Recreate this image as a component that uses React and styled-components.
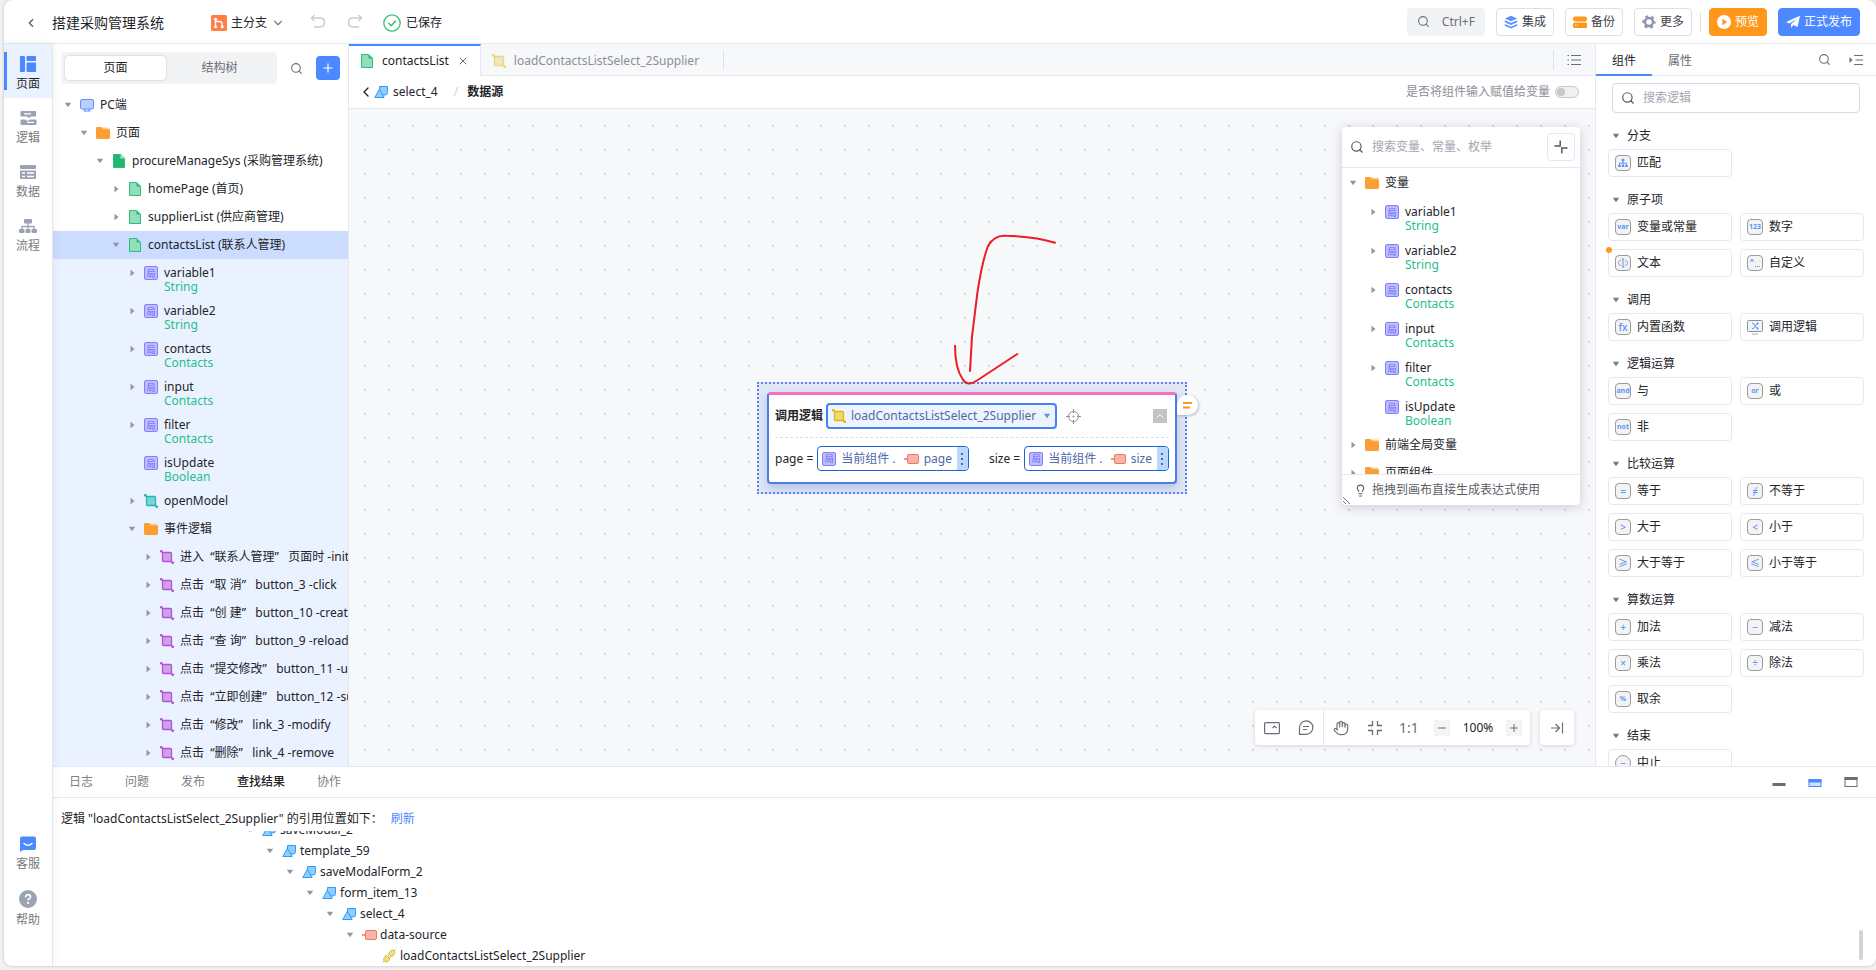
import React, { useState } from 'react';
import styled, { createGlobalStyle } from 'styled-components';
import { Search, ChevronLeft, ChevronDown, X, Plus, Minus, Hand, Lightbulb, ChevronUp } from 'lucide-react';

const GlobalStyle = createGlobalStyle`
  :root {
    --blue: #4c88ff;
    --orange: #ff981a;
    --text: #222429;
    --text-mid: #6b6e75;
    --text-light: #8c8f96;
    --line: #e5e8ee;
    --canvas: #f7f8fa;
    --green: #26bf8c;
  }

  * {
    box-sizing: border-box;
  }

  body {
    margin: 0;
    background: #f2f2f3;
    color: var(--text);
    font-family: "Noto Sans", "Noto Sans CJK SC", sans-serif;
    font-size: 12px;
    line-height: 16px;
  }

  button, input, select {
    font: inherit;
    color: inherit;
    margin: 0;
  }

  button {
    border: 0;
    padding: 0;
    background: none;
    cursor: pointer;
  }

  svg {
    display: block;
    flex: none;
  }
`;

const Page = styled.div`
  height: 100vh;
  padding: 0 0 4px 4px;
`;

const Shell = styled.div`
  height: 100%;
  display: flex;
  flex-direction: column;
  background: #fff;
  border-radius: 8px;
  box-shadow: 0 0 3px rgba(0, 0, 0, 0.25);
  overflow: hidden;
`;

/* ---------- header ---------- */

const Header = styled.header`
  height: 44px;
  flex: none;
  display: flex;
  align-items: center;
  justify-content: space-between;
  padding: 0 16px 0 20px;
  border-bottom: 1px solid var(--line);
`;

const HeaderLeft = styled.div`
  display: flex;
  align-items: center;
  padding-top: 2px;
`;

const ProjectName = styled.h1`
  margin: 0 47px 0 14px;
  font-size: 14px;
  font-weight: 400;
  line-height: 20px;
`;

const BranchButton = styled.button`
  display: flex;
  align-items: center;
  gap: 4px;
  margin-right: 24px;
`;

const HistoryButton = styled.button`
  margin-right: 19px;
  color: #c8cad0;
`;

const SaveState = styled.span`
  display: flex;
  align-items: center;
  gap: 5px;
`;

const HeaderRight = styled.div`
  display: flex;
  align-items: center;
  gap: 11px;
`;

const ShortcutButton = styled.button`
  display: flex;
  align-items: center;
  gap: 12px;
  height: 28px;
  padding: 0 10px;
  border-radius: 4px;
  background: #f1f3f5;
  color: var(--text-mid);
`;

const HeaderButton = styled.button`
  display: flex;
  align-items: center;
  justify-content: center;
  gap: 4px;
  height: 28px;
  padding: 0 7px;
  border-radius: 4px;
  border: 1px solid ${props => props.$fill || '#dcdfea'};
  background: ${props => props.$fill || '#fff'};
  color: ${props => (props.$fill ? '#fff' : '#3d4048')};
`;

const HeaderDivider = styled.span`
  width: 1px;
  height: 20px;
  margin: 0 -3px;
  background: #dcdfea;
`;

/* ---------- body ---------- */

const Body = styled.div`
  flex: 1;
  min-height: 0;
  display: flex;
`;

const Rail = styled.nav`
  width: 49px;
  flex: none;
  display: flex;
  flex-direction: column;
  border-right: 1px solid var(--line);
  box-shadow: 0 0 8px rgba(30, 50, 90, 0.08);
  z-index: 1;
`;

const RailItem = styled.button`
  height: 54px;
  display: flex;
  flex-direction: column;
  align-items: center;
  gap: 4px;
  position: relative;
  padding-top: 12px;
  color: ${props => (props.$active ? 'var(--text)' : '#777a80')};
  background: ${props => (props.$active ? '#ebf2ff' : 'none')};

  &:before {
    content: '';
    display: ${props => (props.$active ? 'block' : 'none')};
    position: absolute;
    left: 0;
    top: 8px;
    bottom: 8px;
    width: 3px;
    background: var(--blue);
  }
`;

const RailSpacer = styled.div`
  flex: 1;
`;

const RailFoot = styled.div`
  display: flex;
  flex-direction: column;
  padding-bottom: 34px;
`;

const Work = styled.div`
  flex: 1;
  min-width: 0;
  display: flex;
  flex-direction: column;
`;

const WorkTop = styled.div`
  flex: 1;
  min-height: 0;
  display: flex;
`;

/* ---------- page tree ---------- */

const TreePanel = styled.aside`
  width: 296px;
  flex: none;
  display: flex;
  flex-direction: column;
  border-right: 1px solid var(--line);
`;

const TreeHead = styled.div`
  display: flex;
  align-items: center;
  height: 47px;
  flex: none;
  padding: 0 8px 7px 8px;
`;

const Segmented = styled.div`
  flex: 1;
  display: flex;
  padding: 4px;
  margin-top: 8px;
  border-radius: 4px;
  background: #f1f3f5;
`;

const Segment = styled.button`
  flex: ${props => (props.$active ? '0 0 101px' : '1')};
  height: 24px;
  border-radius: 4px;
  background: ${props => (props.$active ? '#fff' : 'none')};
  color: ${props => (props.$active ? 'var(--text)' : 'var(--text-mid)')};
  box-shadow: ${props => (props.$active ? '0 0 2px rgba(60, 80, 140, 0.35)' : 'none')};
`;

const TreeSearch = styled.button`
  margin: 8px 13px 0;
  color: var(--text-mid);
`;

const AddButton = styled.button`
  width: 24px;
  height: 24px;
  margin-top: 8px;
  display: flex;
  align-items: center;
  justify-content: center;
  border-radius: 4px;
  background: var(--blue);
  color: #fff;
`;

const List = styled.div`
  flex: 1;
  min-height: 0;
  overflow: hidden;
`;

const Row = styled.div`
  height: 28px;
  display: flex;
  align-items: center;
  gap: 4px;
  padding-left: ${props => props.$pad + props.$level * props.$step}px;
  white-space: pre;
  overflow: hidden;
  background: ${props => props.$bg || 'none'};
`;

const VarRow = styled(Row)`
  height: ${props => props.$height}px;
  align-items: flex-start;
  padding-top: ${props => props.$height - 31}px;
  line-height: 14px;
`;

const Slot = styled.span`
  width: 16px;
  height: 14px;
  flex: none;
  display: flex;
  align-items: center;
  justify-content: ${props => (props.$start ? 'flex-start' : 'center')};
`;

const VarText = styled.span`
  display: flex;
  flex-direction: column;
`;

const TypeName = styled.span`
  color: var(--green);
`;

const VarBadge = styled.span`
  width: 14px;
  height: 14px;
  flex: none;
  display: flex;
  align-items: center;
  justify-content: center;
  border: 1px solid #8080ff;
  border-radius: 2px;
  background: #bcbcff;
  color: #6a6af2;
  font-size: 9px;
  line-height: 9px;
`;

/* ---------- canvas ---------- */

const Main = styled.main`
  flex: 1;
  min-width: 0;
  display: flex;
  flex-direction: column;
`;

const TabBar = styled.div`
  height: 32px;
  flex: none;
  display: flex;
  align-items: center;
  background: var(--canvas);
  border-bottom: 1px solid var(--line);
`;

const FileTab = styled.div`
  display: flex;
  align-items: center;
  gap: 8px;
  height: 32px;
  padding: 0 11px;
  color: ${props => (props.$active ? 'var(--text)' : 'var(--text-light)')};
  background: ${props => (props.$active ? '#fff' : 'none')};
  border-top: 2px solid ${props => (props.$active ? 'var(--blue)' : 'transparent')};
  border-right: 1px solid ${props => (props.$active ? 'var(--line)' : 'transparent')};
`;

const Faded = styled.span`
  opacity: 0.5;
`;

const CloseButton = styled.button`
  color: var(--text-mid);
`;

const VLine = styled.span`
  width: 1px;
  height: 20px;
  background: #dfe2e8;
  margin-left: ${props => props.$gap || 'auto'};
`;

const TabMenu = styled.button`
  padding: 0 14px 0 13px;
  color: var(--text-mid);
`;

const Crumbs = styled.div`
  height: 33px;
  flex: none;
  display: flex;
  align-items: center;
  padding: 0 16px 0 9px;
  border-bottom: 1px solid var(--line);
`;

const CrumbLink = styled.a`
  display: flex;
  align-items: center;
  gap: 5px;
  color: inherit;
  text-decoration: none;
`;

const Slash = styled.span`
  margin: 0 9px 0 16px;
  color: #ccd2dc;
`;

const SwitchLabel = styled.label`
  display: flex;
  align-items: center;
  gap: 5px;
  margin-left: auto;
  color: var(--text-light);
`;

const Switch = styled.input`
  appearance: none;
  width: 24px;
  height: 12px;
  position: relative;
  border: 1px solid #c6c8cc;
  border-radius: 6px;
  background: #f0f0f0;

  &:before {
    content: '';
    position: absolute;
    top: 1px;
    left: ${props => (props.checked ? '13px' : '1px')};
    width: 8px;
    height: 8px;
    border-radius: 4px;
    background: #c6c8cc;
  }
`;

const Canvas = styled.div`
  flex: 1;
  min-height: 0;
  position: relative;
  overflow: hidden;
  background-color: var(--canvas);
  background-image: radial-gradient(circle at 1px 1px, #d4d7db 1px, transparent 1px);
  background-size: 24px 24px;
  background-position: 15px 16px;
`;

const Selection = styled.div`
  position: absolute;
  left: 408px;
  top: 273px;
  padding: 8px;
  border: 2px dotted #5b84ee;
  background: #e1e7f6;
`;

const NodeCard = styled.div`
  border: 2px solid #4d7bea;
  border-top: 3px solid #fb6cc4;
  border-radius: 4px;
  background: #fff;
  padding: 8px 6px 11px;
  box-shadow: 0 4px 10px rgba(50, 80, 160, 0.25);
`;

const NodeHead = styled.div`
  display: flex;
  align-items: center;
  gap: 3px;
  padding-bottom: 8px;
  border-bottom: 1px dashed #dcdee2;
`;

const NodeTitle = styled.strong`
  font-weight: 600;
`;

const LogicPicker = styled.span`
  display: flex;
  align-items: center;
  position: relative;
  height: 26px;
  border: 2px solid #4383f5;
  border-radius: 4px;
  background: #edf4ff;
  padding: 0 4px;
  color: #4d69a8;
`;

const LogicSelect = styled.select`
  appearance: none;
  border: 0;
  outline: 0;
  background: none;
  padding: 0 16px 0 5px;
  margin-right: -10px;
`;

const TargetButton = styled.button`
  margin-left: 6px;
  color: #8f9298;
`;

const FoldButton = styled.button`
  width: 14px;
  height: 14px;
  margin: 0 2px 0 auto;
  display: flex;
  align-items: center;
  justify-content: center;
  background: #c4c4c4;
  color: #fff;
`;

const Params = styled.div`
  display: flex;
  gap: 20px;
  padding-top: 8px;
`;

const Param = styled.div`
  display: flex;
  align-items: center;
  gap: 4px;
  white-space: pre;
`;

const Expr = styled.span`
  display: flex;
  align-items: center;
  gap: 5px;
  height: 25px;
  padding-left: 4px;
  border: 1px solid #1a66d6;
  border-radius: 4px;
  overflow: hidden;
  color: #4d69a8;
`;

const Grip = styled.button`
  width: 11px;
  height: 24px;
  display: flex;
  align-items: center;
  justify-content: center;
  background: #bcd8ff;
  color: #4d69a8;
`;

const NoteBubble = styled.button`
  position: absolute;
  right: -13px;
  top: 11px;
  width: 21px;
  height: 20px;
  padding-left: 6px;
  border-radius: 10px 10px 10px 2px;
  background: #fff;
  box-shadow: 1px 1px 3px rgba(0, 0, 0, 0.25);
`;

const Sketch = styled.svg`
  position: absolute;
  left: 596px;
  top: 121px;
`;

const Float = styled.section`
  position: absolute;
  right: 15px;
  top: 18px;
  width: 238px;
  height: 378px;
  display: flex;
  flex-direction: column;
  border-radius: 4px;
  background: #fff;
  box-shadow: 0 2px 12px rgba(40, 50, 80, 0.22);
`;

const FloatHead = styled.div`
  height: 41px;
  flex: none;
  display: flex;
  align-items: center;
  gap: 8px;
  padding: 0 5px 0 8px;
  border-bottom: 1px solid var(--line);
  margin-bottom: 1px;
`;

const SearchInput = styled.input`
  flex: 1;
  min-width: 0;
  border: 0;
  outline: 0;
  padding: 0;
  background: none;

  &::placeholder {
    color: #a3a7b0;
  }
`;

const ShrinkButton = styled.button`
  width: 28px;
  height: 28px;
  display: flex;
  align-items: center;
  justify-content: center;
  border: 1px solid var(--line);
  border-radius: 4px;
  color: #55585f;
`;

const FloatFoot = styled.div`
  height: 31px;
  flex: none;
  display: flex;
  align-items: center;
  gap: 5px;
  position: relative;
  padding-left: 12px;
  border-top: 1px solid var(--line);
  color: #5d6067;
`;

const ResizeMark = styled.svg`
  position: absolute;
  left: 1px;
  bottom: 1px;
`;

const Tools = styled.div`
  position: absolute;
  right: 21px;
  bottom: 21px;
  display: flex;
  gap: 10px;
`;

const ToolGroup = styled.div`
  display: flex;
  align-items: center;
  height: 35px;
  border-radius: 4px;
  background: #fff;
  box-shadow: 0 1px 4px rgba(40, 60, 110, 0.18);
  color: #6a6d73;
`;

const Tool = styled.button`
  width: 34px;
  height: 35px;
  display: flex;
  align-items: center;
  justify-content: center;
  font-size: 14px;
`;

const ToolDivider = styled.span`
  width: 1px;
  height: 35px;
  background: var(--line);
`;

const ZoomButton = styled.button`
  width: 16px;
  height: 16px;
  margin: 0 ${props => (props.$last ? '8px' : '0')} 0 ${props => (props.$last ? '0' : '8px')};
  display: flex;
  align-items: center;
  justify-content: center;
  background: #f4f4f5;
`;

const ZoomValue = styled.span`
  width: 56px;
  text-align: center;
  color: var(--text);
`;

/* ---------- component palette ---------- */

const Palette = styled.aside`
  width: 281px;
  flex: none;
  display: flex;
  flex-direction: column;
  border-left: 1px solid var(--line);
`;

const PaletteTabs = styled.div`
  height: 32px;
  flex: none;
  display: flex;
  align-items: stretch;
  border-bottom: 1px solid var(--line);
`;

const PaletteTab = styled.button`
  padding: 4px 16px 0;
  margin-bottom: -1px;
  color: ${props => (props.$active ? 'var(--text)' : 'var(--text-mid)')};
  border-bottom: 2px solid ${props => (props.$active ? 'var(--blue)' : 'transparent')};
`;

const PaletteActions = styled.div`
  display: flex;
  align-items: center;
  gap: 18px;
  margin-left: auto;
  padding-right: 13px;
  color: var(--text-mid);
`;

const SearchBox = styled.label`
  flex: none;
  display: flex;
  align-items: center;
  gap: 8px;
  height: 30px;
  margin: 7px 16px 0;
  padding: 0 8px;
  border: 1px solid #d7dbe6;
  border-radius: 4px;
`;

const GroupTitle = styled.h2`
  display: flex;
  align-items: center;
  gap: 7px;
  height: 36px;
  margin: 0;
  padding: 10px 0 0 16px;
  font-size: 12px;
  font-weight: 400;
`;

const GroupGrid = styled.div`
  display: grid;
  grid-template-columns: 1fr 1fr;
  gap: 8px;
  padding: 0 12px;
`;

const PaletteItem = styled.button`
  position: relative;
  display: flex;
  align-items: center;
  gap: 6px;
  height: 28px;
  padding: 0 6px;
  border: 1px solid #e6e8ef;
  border-radius: 4px;
  background: #fff;

  &:before {
    content: '';
    display: ${props => (props.$marked ? 'block' : 'none')};
    position: absolute;
    left: -3px;
    top: -3px;
    width: 6px;
    height: 6px;
    border-radius: 3px;
    background: var(--orange);
  }
`;

const KeyBadge = styled.span`
  width: 16px;
  height: 16px;
  flex: none;
  display: flex;
  align-items: center;
  justify-content: center;
  border: 1px solid #9b9b9b;
  border-radius: ${props => (props.$round ? '8px' : '4px')};
  background: #f3f3f3;
  color: #5c93ff;
  font-size: ${props => (props.$small ? '7px' : '10px')};
  font-weight: ${props => (props.$small ? 700 : 500)};
  line-height: 10px;
`;

/* ---------- bottom panel ---------- */

const Bottom = styled.section`
  height: 200px;
  flex: none;
  display: flex;
  flex-direction: column;
  position: relative;
  border-top: 1px solid var(--line);
`;

const BottomTabs = styled.div`
  height: 31px;
  flex: none;
  display: flex;
  align-items: center;
  gap: 32px;
  padding: 0 18px 0 16px;
  border-bottom: 1px solid var(--line);
`;

const BottomTab = styled.button`
  color: ${props => (props.$active ? 'var(--text)' : '#7d8087')};
  font-weight: ${props => (props.$active ? 500 : 400)};
`;

const WindowButtons = styled.div`
  display: flex;
  gap: 22px;
  margin-left: auto;
`;

const ResultTitle = styled.p`
  display: flex;
  gap: 8px;
  margin: 0;
  padding: 13px 8px 4px;
`;

const RefreshLink = styled.a`
  color: var(--blue);
  text-decoration: none;
`;

const ResultList = styled.div`
  flex: 1;
  min-height: 0;
  display: flex;
  flex-direction: column;
  justify-content: flex-end;
  overflow: hidden;
`;

const ResultRow = styled(Row)`
  height: 21px;
  flex: none;
`;

const ResultName = styled.span`
  margin-left: -2px;
`;

const Thumb = styled.span`
  position: absolute;
  right: 13px;
  bottom: 6px;
  width: 4px;
  height: 30px;
  border-radius: 2px;
  background: #d2d4d8;
`;

/* ---------- icons ---------- */

const Caret = ({ open, color = '#93969c' }) => (
  <svg width="8" height="8" viewBox="0 0 8 8" fill={color}>
    {open ? <path d="M.8 1.8h6.4L4 6.2z" /> : <path d="M2.500 .8 6.500 4 2.500 7.200z" />}
  </svg>
);

const FolderIcon = () => (
  <svg width="14" height="14" viewBox="0 0 14 14">
    <path d="M6 1.5h6.2c.8 0 1.3.5 1.3 1.2V5H6z" fill="#ffcf94" />
    <path d="M0 2.200c0-.8.5-1.2 1.200-1.200h3.600c.6 0 1 .2 1.300.7l.8 1.500h5.700c.8 0 1.400.5 1.400 1.200v7.200c0 .8-.6 1.400-1.400 1.400H1.400C.6 13 0 12.400 0 11.600z" fill="#fb9f34" />
  </svg>
);

const FileIcon = ({ solid }) => (
  <svg width="14" height="14" viewBox="0 0 14 14">
    <path d="M1.500.5h7.300l3.700 3.800v9.200h-11z" fill={solid ? '#24b571' : '#93dfba'} stroke="#2abd7b" strokeLinejoin="round" />
    <path d="M8.500.5v4h4.300z" fill={solid ? '#a6e6c8' : '#2abd7b'} />
  </svg>
);

const ScreenIcon = () => (
  <svg width="14" height="14" viewBox="0 0 14 14">
    <rect x=".5" y="1.500" width="13" height="9.500" rx="1.500" fill="#b9d0ff" stroke="#5b8ffb" />
    <path d="M3.500 13h7M5 11v2M9 11v2" stroke="#5b8ffb" />
  </svg>
);

const LogicIcon = ({ color, fill }) => (
  <svg width="14" height="14" viewBox="0 0 14 14">
    <rect x="2.500" y="2.500" width="9" height="9" rx="1" fill={fill} stroke={color} strokeWidth="1.300" />
    <path d="m1 1 2 2m8 8 2 2" stroke={color} strokeWidth="1.300" />
    <rect x="0" y="0" width="2.600" height="2.600" rx="1" fill={color} />
    <rect x="11.400" y="11.400" width="2.600" height="2.600" rx="1" fill={color} />
  </svg>
);

const ElementIcon = () => (
  <svg width="14" height="14" viewBox="0 0 14 14">
    <path d="M5.500 1.500h8v6q0 2.500-2.500 2.500H6.500q-1 0-1-1z" fill="#90ccff" stroke="#2a9df4" />
    <path d="M5.300 4.300 10.200 12.500H.8z" fill="#90ccff" stroke="#2a9df4" strokeLinejoin="round" />
  </svg>
);

const PropIcon = () => (
  <svg width="15" height="14" viewBox="0 0 15 14">
    <path d="M0 7h4" stroke="#ee7560" strokeWidth="1.500" />
    <rect x="3.500" y="2.500" width="11" height="9" rx="1.500" fill="#f7b5a9" stroke="#ee7560" />
  </svg>
);

const PlugIcon = () => (
  <svg width="14" height="14" viewBox="0 0 14 14" fill="#f1e08a" stroke="#dcbc20">
    <path d="M6.500 4.500 9 1.500q1.500-1 3 .2 1.700 1.600.5 3.300L9.800 8z" />
    <path d="M4.200 6.200 8 10l-1.800 2.200q-1.800 1.600-3.600.2-1.900-1.700-.4-3.600z" />
    <path d="m5.500 7.500 2-1.800m-.5 3.300 1.800-1.800M12.300 1.700 13.700.3M2 12l-1.600 1.600" />
  </svg>
);

const RailIcons = {
  page: (
    <svg width="16" height="16" viewBox="0 0 16 16" fill="#4c88ff">
      <rect width="5" height="16" rx="1" />
      <rect x="6.500" width="9.500" height="5" rx="1" />
      <rect x="6.500" y="6.500" width="9.500" height="9.500" rx="1" />
    </svg>
  ),
  logic: (
    <svg width="17" height="16" viewBox="0 0 17 16" fill="#9aa3b2">
      <path d="M1.500 1H15q1 0 1 1v3.500q0 1-1 1h-4L9 8 7 6.500H1.500q-1 0-1-1V2q0-1 1-1zM4 3.200v1.300h7V3.200z" fillRule="evenodd" />
      <path d="M1.500 9.500H5L7.500 11 10 9.500h5.500q1 0 1 1V14q0 1-1 1h-14q-1 0-1-1v-3.500q0-1 1-1zM7 11.800v1.300h7v-1.300z" fillRule="evenodd" />
    </svg>
  ),
  data: (
    <svg width="16" height="16" viewBox="0 0 16 16">
      <rect y="1" width="16" height="4" rx="1" fill="#9aa3b2" />
      <path d="M0 6.500h16V14q0 1-1 1H1q-1 0-1-1z" fill="#9aa3b2" />
      <path d="M2 9h3M7 9h7M2 12.500h3M7 12.500h7" stroke="#fff" strokeWidth="1.500" />
    </svg>
  ),
  flow: (
    <svg width="18" height="16" viewBox="0 0 18 16" fill="#9aa3b2">
      <rect x="5" y="1" width="8" height="4.500" rx="1" />
      <rect x="0" y="11" width="5.500" height="4" rx="1" />
      <rect x="6.500" y="11" width="5" height="4" rx="1" />
      <rect x="12.500" y="11" width="5.500" height="4" rx="1" />
      <path d="M9 5v6M3 11V8.500h12V11" fill="none" stroke="#9aa3b2" strokeWidth="1.300" />
    </svg>
  ),
  service: (
    <svg width="16" height="16" viewBox="0 0 16 16">
      <path d="M2 .5h12q2 0 2 2V12q0 2-2 2H3L0 16V2.500q0-2 2-2z" fill="#4c88ff" />
      <path d="M4 7.500q4 3.500 8 0" fill="none" stroke="#fff" strokeWidth="1.600" strokeLinecap="round" />
    </svg>
  ),
  help: (
    <svg width="18" height="18" viewBox="0 0 18 18">
      <circle cx="9" cy="9" r="9" fill="#9aa3b2" />
      <path d="M6.600 7.200c0-1.500 1-2.500 2.500-2.500s2.400.9 2.400 2.200c0 1.700-2.400 1.800-2.400 3.700" fill="none" stroke="#fff" strokeWidth="1.700" />
      <circle cx="9.100" cy="12.900" r="1.100" fill="#fff" />
    </svg>
  ),
};

const BranchIcon = () => (
  <svg width="16" height="16" viewBox="0 0 16 16">
    <rect width="16" height="16" rx="1.500" fill="#ff7f45" />
    <path d="M4.500 5v6M5 6.500h3.500q2.500 0 2.500 2.500v2" fill="none" stroke="#fff" strokeWidth="1.300" />
    <circle cx="4.500" cy="4.300" r="1.500" fill="#fff" />
    <circle cx="4.500" cy="11.700" r="1.500" fill="#fff" />
    <circle cx="11.200" cy="11.700" r="1.500" fill="#fff" />
  </svg>
);

const UndoIcon = ({ flip }) => (
  <svg width="18" height="18" viewBox="0 0 18 18" fill="none" stroke="currentColor" strokeWidth="1.400">
    <g transform={flip ? 'matrix(-1 0 0 1 18 0)' : undefined}>
      <path d="M5.500 1 2.500 4l3 3" />
      <path d="M2.500 4H11q4.500 0 4.500 4.500T11 13H5" />
    </g>
  </svg>
);

const SavedIcon = () => (
  <svg width="18" height="18" viewBox="0 0 18 18" fill="none" stroke="#36bf77" strokeWidth="1.300">
    <circle cx="9" cy="9" r="8.200" />
    <path d="m5.500 9 2.700 2.700 4.600-4.900" strokeWidth="1.600" />
  </svg>
);

const LayersIcon = () => (
  <svg width="14" height="14" viewBox="0 0 14 14" fill="#5b8ffb">
    <path d="m7 .8 6.200 2.700L7 6.200.8 3.500z" />
    <path d="M.8 5.300 7 8l6.200-2.700v2L7 10 .8 7.300zM.8 9 7 11.700 13.200 9v1.800L7 13.500.8 10.800z" />
  </svg>
);

const BackupIcon = () => (
  <svg width="14" height="14" viewBox="0 0 14 14">
    <rect y="1.500" width="14" height="5" rx="2" fill="#ff981a" />
    <rect y="7.500" width="14" height="5.500" rx="1.500" fill="#ff981a" />
    <path d="M2 10.300h1M4 10.300h1" stroke="#fff" />
  </svg>
);

const GearIcon = () => (
  <svg width="14" height="14" viewBox="0 0 14 14" fill="none" stroke="#8d93b3">
    <circle cx="7" cy="7" r="4" strokeWidth="2.400" />
    <circle cx="7" cy="7" r="5.900" strokeWidth="1.800" strokeDasharray="3.100 3.080" strokeDashoffset="1.500" />
  </svg>
);

const PlayIcon = () => (
  <svg width="14" height="14" viewBox="0 0 14 14">
    <circle cx="7" cy="7" r="7" fill="#fff" />
    <path d="m5.300 3.800 5 3.200-5 3.200z" fill="#ff981a" />
  </svg>
);

const PlaneIcon = () => (
  <svg width="14" height="14" viewBox="0 0 14 14" fill="#fff">
    <path d="M14 .8 11.500 12 7.300 10 5.300 13 5 9.200 11 3.500 3.600 8.600 0 7z" />
  </svg>
);

const ListIcon = () => (
  <svg width="14" height="14" viewBox="0 0 14 14" fill="none" stroke="currentColor" strokeWidth="1.200">
    <path d="M4 2.500h10M4 7h10M4 11.500h10M.5 2.500H2M.5 7H2M.5 11.500H2" />
  </svg>
);

const IndentIcon = () => (
  <svg width="14" height="14" viewBox="0 0 14 14" fill="none" stroke="currentColor" strokeWidth="1.200">
    <path d="M5 2.500h9M6.500 7H14M5 11.500h9" />
    <path d="m.5 4 3 3-3 3z" fill="currentColor" stroke="none" />
  </svg>
);

const TargetIcon = () => (
  <svg width="15" height="15" viewBox="0 0 15 15" fill="none" stroke="currentColor">
    <circle cx="7.500" cy="7.500" r="5" />
    <path d="M7.500 0v4M7.500 11v4M0 7.500h4M11 7.500h4" />
    <circle cx="7.500" cy="7.500" r="1" fill="currentColor" stroke="none" />
  </svg>
);

const CommentIcon = () => (
  <svg width="16" height="16" viewBox="0 0 16 16" fill="none" stroke="currentColor" strokeWidth="1.200">
    <path d="M1.500 14.300V8A6.700 6.700 0 1 1 8 14.300z" />
    <path d="M5 6.500h6M5 9.500h4" />
  </svg>
);

const MapIcon = () => (
  <svg width="16" height="16" viewBox="0 0 16 16" fill="none" stroke="currentColor" strokeWidth="1.200">
    <rect x=".6" y="2.600" width="14.800" height="11" rx="1" />
    <path d="m8.500 8 2-2 2 2" />
  </svg>
);

const CompressIcon = () => (
  <svg width="16" height="16" viewBox="0 0 16 16" fill="none" stroke="currentColor" strokeWidth="1.300">
    <path d="M1 5.500h4.500V1M10.500 1v4.500H15M1 10.500h4.500V15M10.500 15v-4.500H15" />
  </svg>
);

const ShrinkIcon = () => (
  <svg width="14" height="14" viewBox="0 0 14 14" fill="none" stroke="currentColor" strokeWidth="1.500">
    <path d="M.5 6h5.700V.5M7.800 13.500V8h5.700" />
  </svg>
);

const ToEndIcon = () => (
  <svg width="14" height="14" viewBox="0 0 14 14" fill="none" stroke="currentColor" strokeWidth="1.200">
    <path d="M1 7h8.500M5.500 3l4 4-4 4M12.500 1.500v11" />
  </svg>
);

const BadgeIcons = {
  tree: (
    <svg width="12" height="12" viewBox="0 0 12 12" fill="#5c93ff">
      <circle cx="6" cy="3" r="1.500" />
      <path d="M6 3v6M2.500 9V6.200h7V9" fill="none" stroke="#5c93ff" />
      <path d="M1.200 8h2.600v2H1.200zM4.700 8h2.600v2H4.700zM8.200 8h2.600v2H8.200z" />
    </svg>
  ),
  text: (
    <svg width="12" height="12" viewBox="0 0 12 12" fill="none" stroke="#a4a7ad">
      <path d="M4 3.500Q1.500 3.500 1.500 6T4 8.500M8 3.500q2.500 0 2.500 2.500T8 8.500" />
      <path d="M6 2v8M4.800 2h2.400M4.800 10h2.400" stroke="#5c93ff" />
    </svg>
  ),
  custom: (
    <svg width="12" height="12" viewBox="0 0 12 12" fill="none" stroke="#5c93ff">
      <path d="m1.500 5 1.500-3 1.500 3" />
      <path d="M6 9.500h1M8 9.500h1M10 9.500h1" />
    </svg>
  ),
};

const CallIcon = () => (
  <svg width="16" height="16" viewBox="0 0 16 16" fill="none">
    <rect x=".5" y="1.500" width="15" height="11" rx="1" fill="#f2f3f5" stroke="#8d9096" />
    <path d="M5 4.500h1.500l3.500 5h1.500M5 9.500h1.500l3.500-5h1.500M10.500 3.200v2.600M10.500 8.200v2.600" stroke="#5c93ff" />
    <path d="M5 15h6" stroke="#c9cbcf" strokeWidth="1.500" />
  </svg>
);

/* ---------- data ---------- */

const variables = [
  { name: 'variable1', type: 'String', caret: true },
  { name: 'variable2', type: 'String', caret: true },
  { name: 'contacts', type: 'Contacts', caret: true },
  { name: 'input', type: 'Contacts', caret: true },
  { name: 'filter', type: 'Contacts', caret: true },
  { name: 'isUpdate', type: 'Boolean' },
];

const events = [
  '进入  “联系人管理”   页面时 -init',
  '点击  “取 消”   button_3 -click',
  '点击  “创 建”   button_10 -create',
  '点击  “查 询”   button_9 -reload',
  '点击  “提交修改”   button_11 -update',
  '点击  “立即创建”   button_12 -submit',
  '点击  “修改”   link_3 -modify',
  '点击  “删除”   link_4 -remove',
];

const groups = [
  { title: '分支', items: [{ label: '匹配', icon: BadgeIcons.tree }] },
  {
    title: '原子项',
    items: [
      { label: '变量或常量', key: 'var', small: true },
      { label: '数字', key: '123', small: true },
      { label: '文本', icon: BadgeIcons.text, marked: true },
      { label: '自定义', icon: BadgeIcons.custom },
    ],
  },
  { title: '调用', items: [{ label: '内置函数', key: 'fx' }, { label: '调用逻辑', call: true }] },
  {
    title: '逻辑运算',
    items: [
      { label: '与', key: 'and', small: true },
      { label: '或', key: 'or', small: true },
      { label: '非', key: 'not', small: true },
    ],
  },
  {
    title: '比较运算',
    items: [
      { label: '等于', key: '=' },
      { label: '不等于', key: '≠' },
      { label: '大于', key: '>' },
      { label: '小于', key: '<' },
      { label: '大于等于', key: '≥' },
      { label: '小于等于', key: '≤' },
    ],
  },
  {
    title: '算数运算',
    items: [
      { label: '加法', key: '+' },
      { label: '减法', key: '−' },
      { label: '乘法', key: '×' },
      { label: '除法', key: '÷' },
      { label: '取余', key: '%', small: true },
    ],
  },
  { title: '结束', items: [{ label: '中止', key: '−', round: true }] },
];

const results = [
  { name: 'saveModal_2', icon: <ElementIcon /> },
  { name: 'template_59', icon: <ElementIcon /> },
  { name: 'saveModalForm_2', icon: <ElementIcon /> },
  { name: 'form_item_13', icon: <ElementIcon /> },
  { name: 'select_4', icon: <ElementIcon /> },
  { name: 'data-source', icon: <PropIcon /> },
  { name: 'loadContactsListSelect_2Supplier', icon: <PlugIcon />, leaf: true },
];

/* ---------- parts ---------- */

function TreeRow({ level, open, leaf, icon, label, bg, pad = 7, step = 16 }) {
  return (
    <Row $level={level} $pad={pad} $step={step} $bg={bg}>
      <Slot>{!leaf && <Caret open={open} />}</Slot>
      <Slot $start>{icon}</Slot>
      <span>{label}</span>
    </Row>
  );
}

function VariableRows({ level, pad, step, height, bg }) {
  return variables.map(item => (
    <VarRow key={item.name} $level={level} $pad={pad} $step={step} $height={height} $bg={bg}>
      <Slot>{item.caret && <Caret />}</Slot>
      <Slot $start><VarBadge>局</VarBadge></Slot>
      <VarText>
        <span>{item.name}</span>
        <TypeName>{item.type}</TypeName>
      </VarText>
    </VarRow>
  ));
}

function TopBar() {
  return (
    <Header>
      <HeaderLeft>
        <button aria-label="back"><ChevronLeft size={14} color="#55585f" /></button>
        <ProjectName>搭建采购管理系统</ProjectName>
        <BranchButton>
          <BranchIcon />
          主分支
          <ChevronDown size={14} color="#777a80" />
        </BranchButton>
        <HistoryButton aria-label="undo"><UndoIcon /></HistoryButton>
        <HistoryButton aria-label="redo"><UndoIcon flip /></HistoryButton>
        <SaveState><SavedIcon />已保存</SaveState>
      </HeaderLeft>
      <HeaderRight>
        <ShortcutButton><Search size={13} />Ctrl+F</ShortcutButton>
        <HeaderButton><LayersIcon />集成</HeaderButton>
        <HeaderButton><BackupIcon />备份</HeaderButton>
        <HeaderButton><GearIcon />更多</HeaderButton>
        <HeaderDivider />
        <HeaderButton $fill="#ff981a"><PlayIcon />预览</HeaderButton>
        <HeaderButton $fill="#4c88ff"><PlaneIcon />正式发布</HeaderButton>
      </HeaderRight>
    </Header>
  );
}

function PageTree() {
  const tint = '#ebf2ff';
  return (
    <TreePanel>
      <TreeHead>
        <Segmented>
          <Segment $active>页面</Segment>
          <Segment>结构树</Segment>
        </Segmented>
        <TreeSearch aria-label="search"><Search size={13} /></TreeSearch>
        <AddButton aria-label="add"><Plus size={14} /></AddButton>
      </TreeHead>
      <List>
        <TreeRow level={0} open icon={<ScreenIcon />} label="PC端" />
        <TreeRow level={1} open icon={<FolderIcon />} label="页面" />
        <TreeRow level={2} open icon={<FileIcon solid />} label="procureManageSys (采购管理系统)" />
        <TreeRow level={3} icon={<FileIcon />} label="homePage (首页)" />
        <TreeRow level={3} icon={<FileIcon />} label="supplierList (供应商管理)" />
        <TreeRow level={3} open icon={<FileIcon />} label="contactsList (联系人管理)" bg="#ccdcfe" />
        <VariableRows level={4} pad={7} step={16} height={38} bg={tint} />
        <TreeRow level={4} icon={<LogicIcon color="#1fb5b5" fill="#7fd3d6" />} label="openModel" bg={tint} />
        <TreeRow level={4} open icon={<FolderIcon />} label="事件逻辑" bg={tint} />
        {events.map(name => (
          <TreeRow key={name} level={5} icon={<LogicIcon color="#b053d6" fill="#cf9fe8" />} label={name} bg={tint} />
        ))}
      </List>
    </TreePanel>
  );
}

function ParamInput({ name }) {
  return (
    <Param>
      {name} =
      <Expr>
        <VarBadge>局</VarBadge>
        <span>当前组件 . </span>
        <PropIcon />
        <span>{name}</span>
        <Grip aria-label={name}>
          <svg width="2" height="12" viewBox="0 0 2 12" fill="currentColor">
            <path d="M0 0h2v2H0zM0 5h2v2H0zM0 10h2v2H0z" />
          </svg>
        </Grip>
      </Expr>
    </Param>
  );
}

function LogicNode() {
  return (
    <Selection>
      <NodeCard>
        <NodeHead>
          <NodeTitle>调用逻辑</NodeTitle>
          <LogicPicker>
            <LogicIcon color="#e0b800" fill="#ecd97c" />
            <LogicSelect aria-label="调用逻辑">
              <option>loadContactsListSelect_2Supplier</option>
            </LogicSelect>
            <Caret open color="#5f92dd" />
          </LogicPicker>
          <TargetButton aria-label="locate"><TargetIcon /></TargetButton>
          <FoldButton aria-label="fold"><ChevronUp size={12} /></FoldButton>
        </NodeHead>
        <Params>
          <ParamInput name="page" />
          <ParamInput name="size" />
        </Params>
      </NodeCard>
      <NoteBubble aria-label="note">
        <svg width="9" height="7" viewBox="0 0 9 7">
          <path d="M0 1h9M0 5.500h7" stroke="#ff981a" strokeWidth="2" />
        </svg>
      </NoteBubble>
    </Selection>
  );
}

function VariablePanel() {
  return (
    <Float>
      <FloatHead>
        <Search size={14} color="#55585f" />
        <SearchInput aria-label="搜索变量、常量、枚举" placeholder="搜索变量、常量、枚举" />
        <ShrinkButton aria-label="shrink"><ShrinkIcon /></ShrinkButton>
      </FloatHead>
      <List>
        <TreeRow level={0} pad={3} step={20} open icon={<FolderIcon />} label="变量" />
        <VariableRows level={1} pad={3} step={20} height={39} />
        <TreeRow level={0} pad={3} step={20} icon={<FolderIcon />} label="前端全局变量" />
        <TreeRow level={0} pad={3} step={20} icon={<FolderIcon />} label="页面组件" />
      </List>
      <FloatFoot>
        <Lightbulb size={13} />
        拖拽到画布直接生成表达式使用
        <ResizeMark width="8" height="8" viewBox="0 0 8 8" stroke="#777a80">
          <path d="m0 1 7 7M0 5l3 3" />
        </ResizeMark>
      </FloatFoot>
    </Float>
  );
}

function Editor() {
  const [assign, setAssign] = useState(false);

  return (
    <Main>
      <TabBar>
        <FileTab $active>
          <FileIcon />
          contactsList
          <CloseButton aria-label="close"><X size={12} /></CloseButton>
        </FileTab>
        <FileTab>
          <Faded><LogicIcon color="#e0b800" fill="#ecd97c" /></Faded>
          loadContactsListSelect_2Supplier
        </FileTab>
        <VLine $gap="12px" />
        <VLine />
        <TabMenu aria-label="tabs"><ListIcon /></TabMenu>
      </TabBar>
      <Crumbs>
        <button aria-label="back"><ChevronLeft size={16} /></button>
        <CrumbLink href="#select_4"><ElementIcon />select_4</CrumbLink>
        <Slash>/</Slash>
        <NodeTitle>数据源</NodeTitle>
        <SwitchLabel>
          是否将组件输入赋值给变量
          <Switch type="checkbox" checked={assign} onChange={e => setAssign(e.target.checked)} />
        </SwitchLabel>
      </Crumbs>
      <Canvas>
        <LogicNode />
        <Sketch width="120" height="160" viewBox="0 0 120 160" fill="none" stroke="#ed1c24" strokeWidth="2" strokeLinecap="round">
          <path d="M110 12.700Q90 6.500 61 5.800 49 5 43 16 37 32 32.300 63.300L27 106.700 25 141" />
          <path d="M10 115.700Q10 138 17.700 149.300 22 157 32 150.500L72.300 124" />
        </Sketch>
        <VariablePanel />
        <Tools>
          <ToolGroup>
            <Tool aria-label="map"><MapIcon /></Tool>
            <Tool aria-label="comment"><CommentIcon /></Tool>
            <ToolDivider />
            <Tool aria-label="drag"><Hand size={16} strokeWidth={1.7} /></Tool>
            <Tool aria-label="fit"><CompressIcon /></Tool>
            <Tool>1:1</Tool>
            <ZoomButton aria-label="zoom out"><Minus size={12} /></ZoomButton>
            <ZoomValue>100%</ZoomValue>
            <ZoomButton $last aria-label="zoom in"><Plus size={12} /></ZoomButton>
          </ToolGroup>
          <ToolGroup>
            <Tool aria-label="to end"><ToEndIcon /></Tool>
          </ToolGroup>
        </Tools>
      </Canvas>
    </Main>
  );
}

function ComponentPalette() {
  return (
    <Palette>
      <PaletteTabs>
        <PaletteTab $active>组件</PaletteTab>
        <PaletteTab>属性</PaletteTab>
        <PaletteActions>
          <button aria-label="search"><Search size={13} /></button>
          <button aria-label="collapse"><IndentIcon /></button>
        </PaletteActions>
      </PaletteTabs>
      <SearchBox>
        <Search size={14} color="#55585f" />
        <SearchInput aria-label="搜索逻辑" placeholder="搜索逻辑" />
      </SearchBox>
      <List>
        {groups.map(group => (
          <section key={group.title}>
            <GroupTitle><Caret open color="#777a80" />{group.title}</GroupTitle>
            <GroupGrid>
              {group.items.map(item => (
                <PaletteItem key={item.label} $marked={item.marked}>
                  {item.call ? <CallIcon /> : (
                    <KeyBadge $small={item.small} $round={item.round}>{item.icon || item.key}</KeyBadge>
                  )}
                  {item.label}
                </PaletteItem>
              ))}
            </GroupGrid>
          </section>
        ))}
      </List>
    </Palette>
  );
}

function SearchResults() {
  return (
    <Bottom>
      <BottomTabs>
        <BottomTab>日志</BottomTab>
        <BottomTab>问题</BottomTab>
        <BottomTab>发布</BottomTab>
        <BottomTab $active>查找结果</BottomTab>
        <BottomTab>协作</BottomTab>
        <WindowButtons>
          <button aria-label="minimize">
            <svg width="14" height="12" viewBox="0 0 14 12"><path d="M.5 8.500h13" stroke="#6b6e75" strokeWidth="3" /></svg>
          </button>
          <button aria-label="half">
            <svg width="14" height="12" viewBox="0 0 14 12">
              <rect x="1" y="3.500" width="12" height="7" fill="#cfe0ff" stroke="#4c88ff" />
              <path d="M.5 5h13" stroke="#4c88ff" strokeWidth="3" />
            </svg>
          </button>
          <button aria-label="full">
            <svg width="14" height="12" viewBox="0 0 14 12">
              <rect x="1" y="1.500" width="12" height="9" fill="#fff" stroke="#6b6e75" />
              <path d="M.5 2.500h13" stroke="#6b6e75" strokeWidth="3" />
            </svg>
          </button>
        </WindowButtons>
      </BottomTabs>
      <ResultTitle>
        逻辑 "loadContactsListSelect_2Supplier" 的引用位置如下：
        <RefreshLink href="#refresh">刷新</RefreshLink>
      </ResultTitle>
      <ResultList>
        {results.map((item, index) => (
          <ResultRow key={item.name} $level={index + 9} $pad={9} $step={20}>
            <Slot>{!item.leaf && <Caret open />}</Slot>
            <Slot $start>{item.icon}</Slot>
            <ResultName>{item.name}</ResultName>
          </ResultRow>
        ))}
      </ResultList>
      <Thumb />
    </Bottom>
  );
}

function App() {
  return (
    <Page>
      <GlobalStyle />
      <Shell>
        <TopBar />
        <Body>
          <Rail>
            <RailItem $active>{RailIcons.page}页面</RailItem>
            <RailItem>{RailIcons.logic}逻辑</RailItem>
            <RailItem>{RailIcons.data}数据</RailItem>
            <RailItem>{RailIcons.flow}流程</RailItem>
            <RailSpacer />
            <RailFoot>
              <RailItem>{RailIcons.service}客服</RailItem>
              <RailItem>{RailIcons.help}帮助</RailItem>
            </RailFoot>
          </Rail>
          <Work>
            <WorkTop>
              <PageTree />
              <Editor />
              <ComponentPalette />
            </WorkTop>
            <SearchResults />
          </Work>
        </Body>
      </Shell>
    </Page>
  );
}

export default App;
